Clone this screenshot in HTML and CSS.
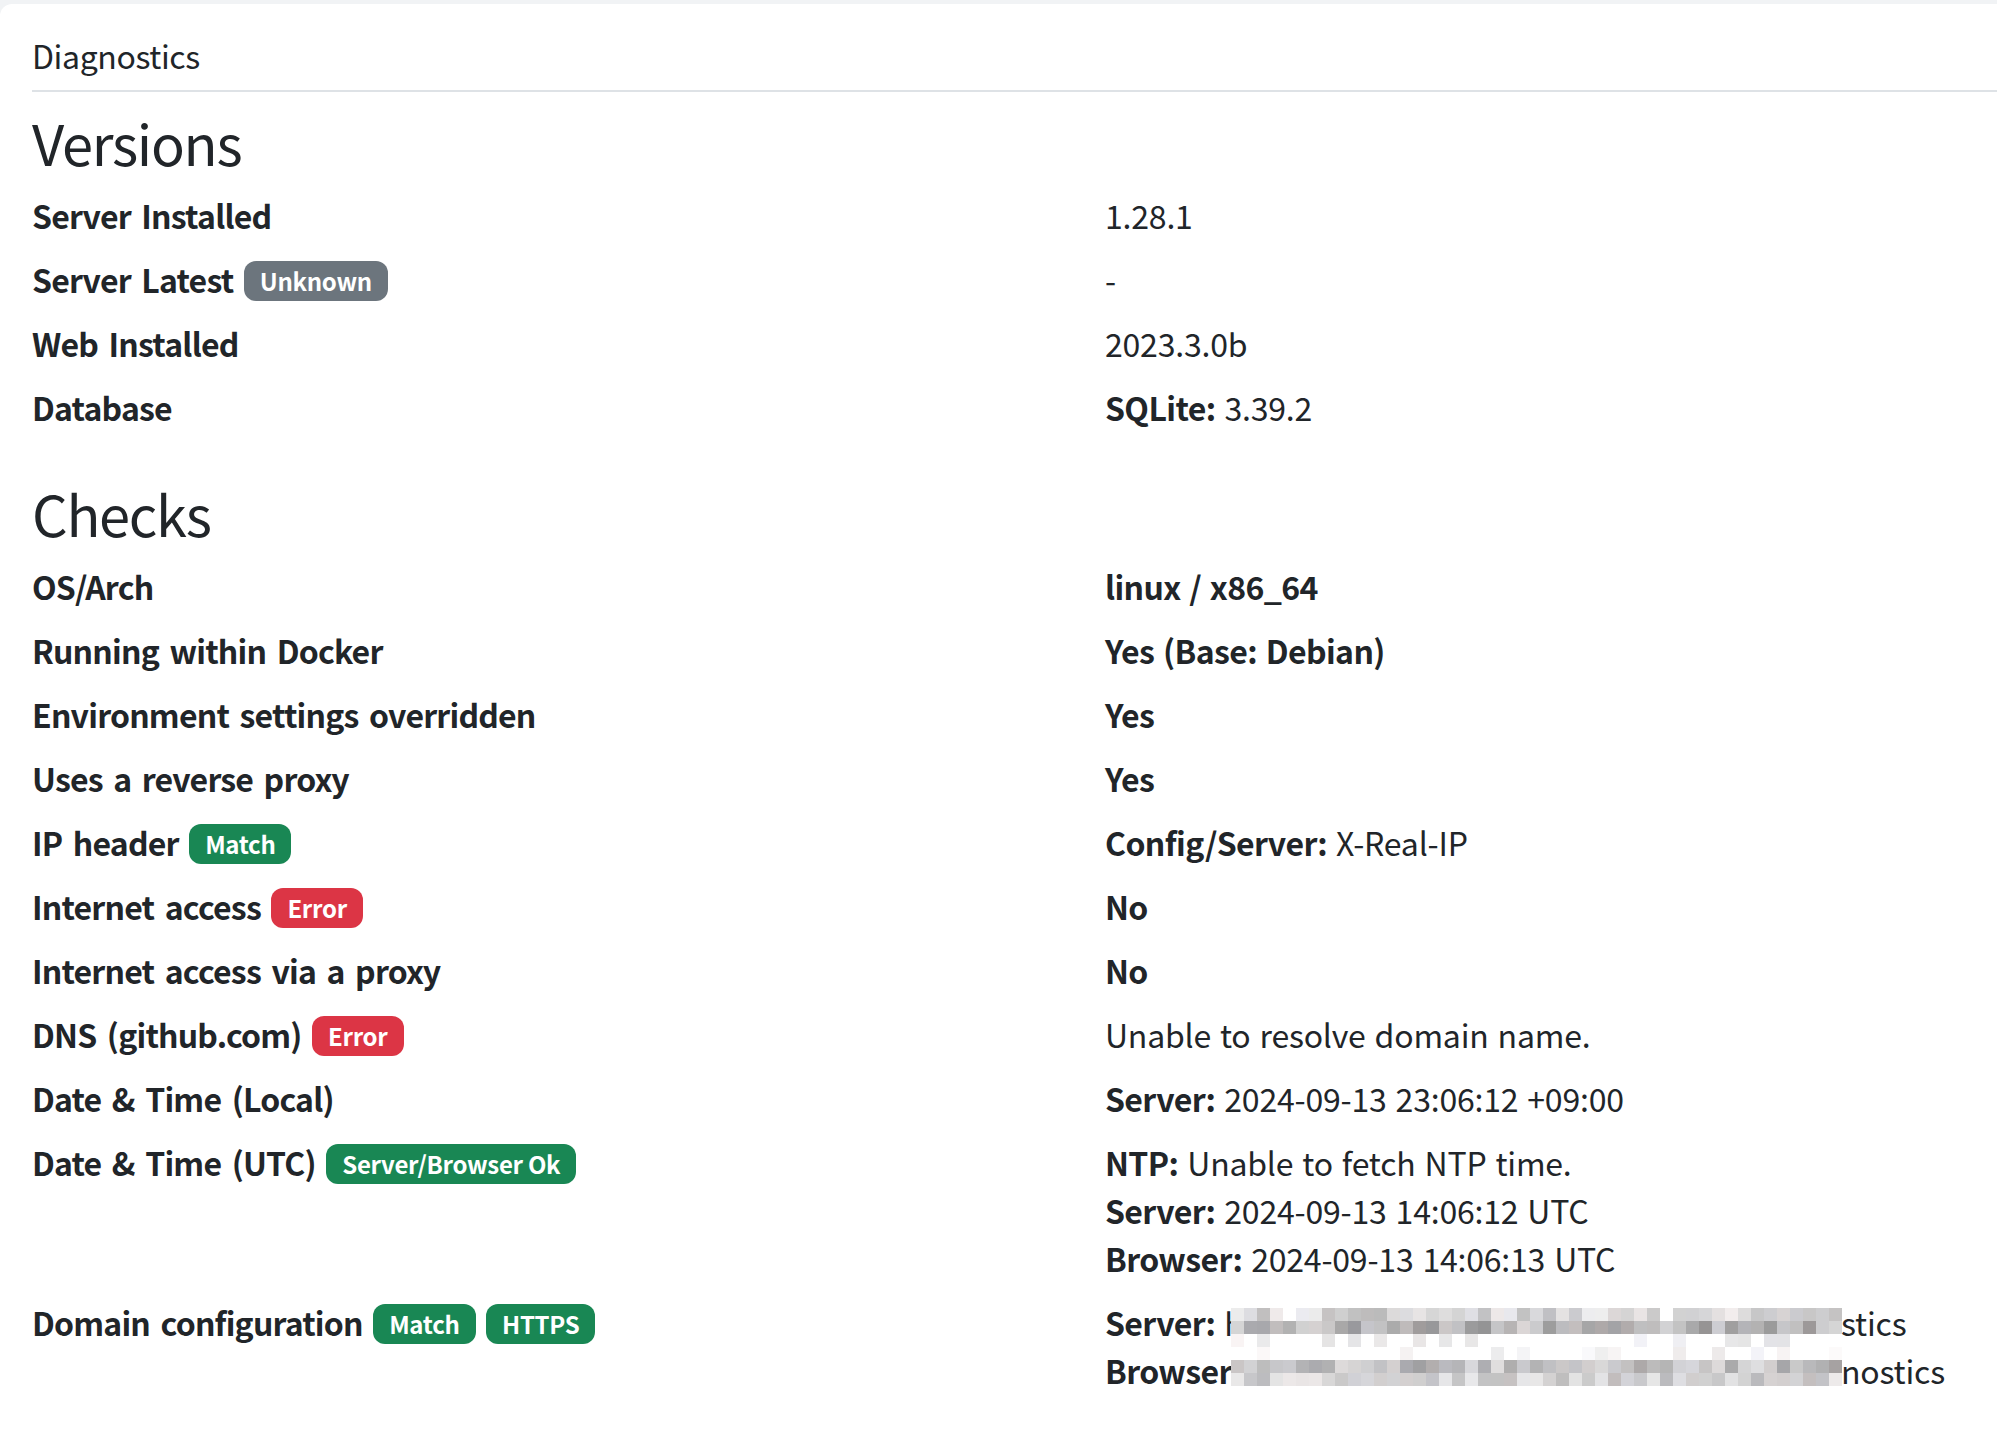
FILE: index.html
```html
<!DOCTYPE html>
<html lang="en">
<head>
<meta charset="utf-8">
<title>Diagnostics</title>
<link rel="stylesheet" href="styles.css">
</head>
<body>
<main class="page">
  <div class="block">
    <h6 class="block-title">Diagnostics</h6>

    <h3 class="section-title">Versions</h3>
    <dl class="facts">
      <dt>Server Installed</dt>
      <dd>1.28.1</dd>
      <dt>Server Latest <span class="badge badge-secondary">Unknown</span></dt>
      <dd>-</dd>
      <dt>Web Installed</dt>
      <dd>2023.3.0b</dd>
      <dt>Database</dt>
      <dd><b>SQLite:</b> 3.39.2</dd>
    </dl>

    <h3 class="section-title">Checks</h3>
    <dl class="facts">
      <dt>OS/Arch</dt>
      <dd><b>linux / x86_64</b></dd>
      <dt>Running within Docker</dt>
      <dd><b>Yes (Base: Debian)</b></dd>
      <dt>Environment settings overridden</dt>
      <dd><b>Yes</b></dd>
      <dt>Uses a reverse proxy</dt>
      <dd><b>Yes</b></dd>
      <dt>IP header <span class="badge badge-success">Match</span></dt>
      <dd><b>Config/Server:</b> X-Real-IP</dd>
      <dt>Internet access <span class="badge badge-danger">Error</span></dt>
      <dd><b>No</b></dd>
      <dt>Internet access via a proxy</dt>
      <dd><b>No</b></dd>
      <dt>DNS (github.com) <span class="badge badge-danger">Error</span></dt>
      <dd>Unable to resolve domain name.</dd>
      <dt>Date &amp; Time (Local)</dt>
      <dd><b>Server:</b> 2024-09-13 23:06:12 +09:00</dd>
      <dt>Date &amp; Time (UTC) <span class="badge badge-success">Server/Browser Ok</span></dt>
      <dd><b>NTP:</b> Unable to fetch NTP time.<br><b>Server:</b> 2024-09-13 14:06:12 UTC<br><b>Browser:</b> 2024-09-13 14:06:13 UTC</dd>
      <dt>Domain configuration <span class="badge badge-success">Match</span> <span class="badge badge-success">HTTPS</span></dt>
      <dd class="redacted">
        <span class="url-line"><span class="url-head"><b>Server:</b> h</span>stics</span><br>
        <span class="url-line"><span class="url-head"><b>Browser</b></span>nostics</span>
        <span class="mosaic" aria-hidden="true"></span>
      </dd>
    </dl>
  </div>
</main>
<script src="script.js"></script>
</body>
</html>
```
FILE: styles.css
```css
* {
  box-sizing: border-box;
}

html,
body {
  margin: 0;
}

body {
  background: #f1f3f5;
  color: #212529;
  font-family: "Noto Sans CJK KR", "Noto Sans", sans-serif;
  font-size: 32px;
  line-height: 48px;
  letter-spacing: -0.2px;
}

.page {
  padding-top: 4px;
}

.block {
  background: #fff;
  border-radius: 12px 0 0 12px;
  padding: 32px 0 32px 32px;
  min-height: 1500px;
}

.block-title {
  font-size: 32px;
  font-weight: 400;
  line-height: 38px;
  letter-spacing: -0.4px;
  margin: 0 0 16px;
  padding-bottom: 16px;
  border-bottom: 2px solid #dee2e6;
}

.section-title {
  font-size: 56px;
  font-weight: 400;
  line-height: 67px;
  letter-spacing: -1.3px;
  margin: 0 0 16px;
}

.facts {
  display: grid;
  grid-template-columns: 1073px 1fr;
  margin: 0 0 32px;
}

.facts dt {
  font-weight: 700;
  letter-spacing: -0.8px;
  word-spacing: 4px;
  margin: 0;
}

.facts dd {
  margin: 0 0 16px;
  word-spacing: 2px;
}

.facts b {
  font-weight: 700;
  letter-spacing: -0.6px;
}

.badge {
  display: inline-block;
  font-size: 24px;
  font-weight: 700;
  line-height: 1;
  letter-spacing: -0.3px;
  word-spacing: 0;
  padding: 8px 16px;
  border-radius: 12px;
  color: #fff;
  vertical-align: 2px;
}

.badge-secondary {
  background: #6c757d;
}

.badge-success {
  background: #198754;
}

.badge-danger {
  background: #dc3545;
}

.redacted {
  position: relative;
}

.url-head {
  display: inline-block;
  width: 736px;
  white-space: nowrap;
}

.mosaic {
  position: absolute;
  left: 126px;
  top: 10px;
  display: grid;
  grid-template-columns: repeat(47, 13px);
  grid-auto-rows: 13px;
}
```
FILE: script.js
```js
(function () {
  var box = document.querySelector('.mosaic');
  if (!box) return;
  var seed = 20240913;
  function rnd() {
    seed = (seed * 1103515245 + 12345) % 2147483648;
    return seed / 2147483648;
  }
  // [min, max, chance of white]
  var rows = [
    [186, 238, 0.03],
    [146, 218, 0],
    [226, 246, 0.76],
    [234, 250, 0.7],
    [160, 226, 0],
    [184, 234, 0]
  ];
  for (var r = 0; r < rows.length; r++) {
    for (var c = 0; c < 47; c++) {
      var cfg = rows[r];
      var v;
      if (rnd() < cfg[2]) {
        v = 255;
      } else {
        v = Math.round(cfg[0] + rnd() * (cfg[1] - cfg[0]));
      }
      var t = Math.round((rnd() - 0.5) * 10);
      var red = Math.min(255, v + (t > 0 ? t : 0));
      var blue = Math.min(255, v + (t < 0 ? -t : 0));
      var cell = document.createElement('span');
      cell.style.background = 'rgb(' + red + ',' + v + ',' + blue + ')';
      box.appendChild(cell);
    }
  }
})();
```
